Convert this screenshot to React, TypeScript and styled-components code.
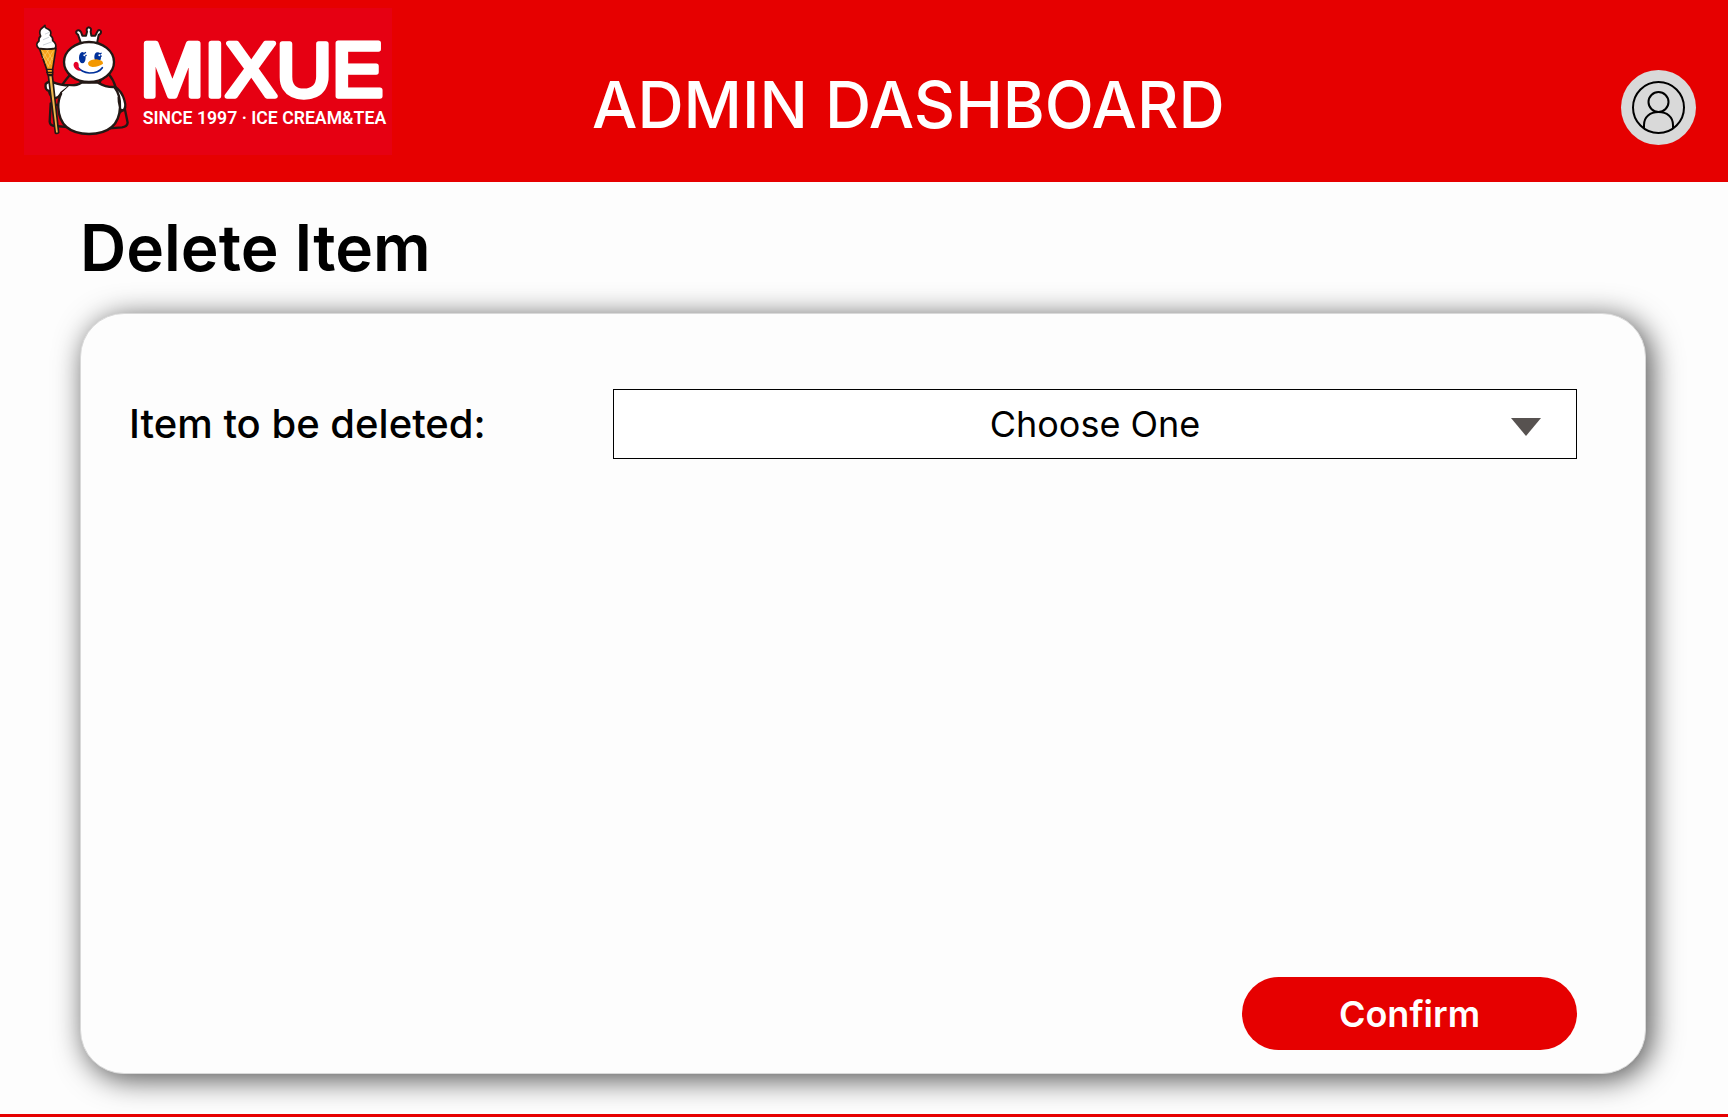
import React, { useState } from "react";
import styled, { createGlobalStyle } from "styled-components";

const RED = "#e60000";
const PAPER = "#fdfdfd";

const GlobalStyle = createGlobalStyle`
  *, *::before, *::after { box-sizing: border-box; }
  body {
    margin: 0;
    background: ${PAPER};
    color: #000;
    font-family: Inter, "Liberation Sans", sans-serif;
  }
`;

const Page = styled.div`
  display: flex;
  flex-direction: column;
  min-height: 100vh;
`;

const Header = styled.header`
  display: flex;
  align-items: center;
  min-height: 182px;
  padding: 8px 32px 0 24px;
  background: ${RED};
`;

const LogoLink = styled.a`
  display: block;
  flex: none;
  align-self: flex-start;
  line-height: 0;
`;

const LogoArt = styled.svg`
  width: 368px;
  height: 147px;
  background: #e60012;
`;

const HeaderTitle = styled.h1`
  flex: 1;
  margin: 20px 0 0 200px;
  font-size: 64px;
  font-weight: 500;
  line-height: 78px;
  color: #fff;
`;

const AvatarButton = styled.button`
  display: grid;
  place-items: center;
  flex: none;
  width: 75px;
  height: 75px;
  margin-top: 25px;
  padding: 0;
  border: 0;
  border-radius: 50%;
  background: #d9d9d9;
  cursor: pointer;
`;

const Main = styled.main`
  display: flex;
  flex: 1;
  flex-direction: column;
  gap: 26px;
  padding: 27px 82px 40px 80px;
`;

const PageTitle = styled.h2`
  margin: 0;
  font-size: 64px;
  font-weight: 600;
  line-height: 78px;
`;

const Panel = styled.form`
  display: flex;
  flex: 1;
  flex-direction: column;
  justify-content: space-between;
  gap: 48px;
  padding: 75px 68px 23px 48px;
  border: 1px solid #d9d9d9;
  border-radius: 44px;
  background: ${PAPER};
  box-shadow: 5px 5px 30px rgba(0, 0, 0, 0.7);
`;

const Field = styled.div`
  display: grid;
  grid-template-columns: 484px 1fr;
  align-items: center;
`;

const FieldLabel = styled.label`
  font-size: 40px;
  font-weight: 500;
  line-height: 48px;
`;

const SelectBox = styled.div`
  display: grid;
  align-items: center;
  > * { grid-area: 1 / 1; }
`;

const Select = styled.select`
  appearance: none;
  width: 100%;
  height: 70px;
  padding: 0 64px;
  border: 1px solid #000;
  border-radius: 0;
  background: #fff;
  color: #000;
  font-family: inherit;
  font-size: 36px;
  font-weight: 400;
  line-height: 44px;
  text-align: center;
  text-align-last: center;
`;

const Arrow = styled.svg`
  justify-self: end;
  width: 30px;
  height: 18px;
  margin: 6px 36px 0 0;
  pointer-events: none;
`;

const ConfirmButton = styled.button`
  align-self: flex-end;
  width: 335px;
  height: 73px;
  padding: 0;
  border: 0;
  border-radius: 37px;
  background: ${RED};
  color: #fff;
  font-family: inherit;
  font-size: 36px;
  font-weight: 600;
  line-height: 44px;
  cursor: pointer;
`;

const Footer = styled.footer`
  height: 3px;
  background: ${RED};
`;

function Logo() {
  return (
    <LogoArt viewBox="72 24 1104 441" role="img" aria-label="Mixue, since 1997, ice cream and tea">
      <g stroke="#231815" strokeWidth="7" strokeLinejoin="round" strokeLinecap="round">
        {/* cape */}
        <path d="M212 222 Q198 238 187 254 L250 262 L240 240 Z" fill="#e60012" />
        <path d="M326 222 Q340 238 347 262 L295 260 L302 240 Z" fill="#e60012" />
        <path d="M152 310 L149 365 Q150 378 165 378 L215 382 L190 320 Z" fill="#e60012" />
        <path d="M374 325 L383 368 Q382 380 366 382 L318 386 L350 345 Z" fill="#e60012" />
        {/* arms and body */}
        <path d="M212 256 Q180 256 160 247 Q144 242 137 252 Q134 270 147 273 Q150 290 162 295 Q176 294 184 278 Z" fill="#fff" />
        <path d="M345 260 Q366 274 373 300 Q381 326 368 332 Q356 328 358 312 L340 280 Z" fill="#fff" />
        <path d="M212 256 Q232 256 244 248 L294 248 Q318 262 343 261 Q362 285 360 322 Q357 400 267 402 Q178 400 175 322 Q174 300 184 280" fill="#fff" />
        <path d="M206 259 L186 278 L200 300 L240 262 Z" fill="#fff" stroke="none" />
        <path d="M355 293 Q354 306 360 324" fill="none" strokeWidth="5" />
        {/* crown */}
        <path d="M243 130 L234 104 Q227 100 229 94 Q236 87 243 96 L247 107 L258 107 L261 95 Q257 84 267 82 Q276 85 272 95 L274 107 L286 107 L292 95 Q297 86 303 94 Q304 101 296 105 L291 130 Z" fill="#fff" strokeWidth="6" />
        <ellipse cx="267" cy="186" rx="75" ry="60" fill="#fff" />
        {/* staff and cone */}
        <path d="M145 226 L157 226 L176 398 Q171 402 166 399 Z" fill="#efb74d" strokeWidth="5" />
        <path d="M118 145 L168 145 L158 208 L158 224 L143 224 L140 208 Z" fill="#f6a21b" strokeWidth="5" />
        <path d="M139 208 L158 208 M140 217 L158 217" strokeWidth="4" />
        <path d="M116 145 Q104 133 117 123 Q115 114 122 108 Q116 96 123 87 Q130 82 135 76 Q132 83 145 88 Q156 94 151 106 Q160 112 158 122 Q173 134 165 145 Q142 150 116 145 Z" fill="#fff" strokeWidth="5" />
      </g>
      <path d="M126 152 L154 194 M140 150 L158 180 M128 166 L146 200 M160 152 L136 190 M146 150 L128 176 M158 170 L144 200" stroke="#fbd071" strokeWidth="2" />
      <path d="M136 102 L148 97 M130 119 L146 112 M130 135 L154 126" stroke="#cfd3d8" strokeWidth="3" strokeLinecap="round" />
      {/* face */}
      <ellipse cx="247" cy="173" rx="10" ry="17" fill="#00319b" />
      <ellipse cx="293" cy="171" rx="10" ry="14" fill="#00319b" />
      <path d="M249 162 L258 157 M251 168 L260 166 M296 163 L305 159 M297 170 L305 168" stroke="#00319b" strokeWidth="4" />
      <circle cx="253" cy="166" r="3" fill="#fff" />
      <circle cx="298" cy="166" r="3" fill="#fff" />
      <path d="M234 203 Q246 217 268 219 Q296 219 307 203" fill="none" stroke="#00319b" strokeWidth="5" strokeLinecap="round" />
      <path d="M236 203 Q238 185 228 185 Q219 187 221 198 Q226 213 243 212 Z" fill="#e60027" />
      <path d="M264 188 Q272 178 290 178 Q310 181 309 191 Q298 200 278 201 Q264 199 264 188 Z" fill="#f39800" />
      <text
        x="421"
        y="289"
        fill="#fff"
        stroke="#fff"
        strokeWidth="16"
        strokeLinejoin="round"
        fontFamily="'Liberation Sans', Arial, sans-serif"
        fontSize="230"
        fontWeight="400"
      >
        MIXUE
      </text>
      <text x="428" y="372" fill="#fff" fontFamily="Roboto, sans-serif" fontSize="53" fontWeight="600">
        SINCE 1997 · ICE CREAM&amp;TEA
      </text>
    </LogoArt>
  );
}

function UserIcon() {
  return (
    <svg width="53" height="53" viewBox="0 0 53 53" fill="none" stroke="#000" strokeWidth="2" aria-hidden="true">
      <circle cx="26.5" cy="26.5" r="25.5" />
      <circle cx="26.5" cy="21" r="10" />
      <path d="M12 47 V44 C12 36 18 31 26.5 31 S41 36 41 44 V47" />
    </svg>
  );
}

export default function App() {
  const [item, setItem] = useState("");

  return (
    <>
      <GlobalStyle />
      <Page>
        <Header>
          <LogoLink href="#">
            <Logo />
          </LogoLink>
          <HeaderTitle>ADMIN DASHBOARD</HeaderTitle>
          <AvatarButton type="button" aria-label="Account">
            <UserIcon />
          </AvatarButton>
        </Header>
        <Main>
          <PageTitle>Delete Item</PageTitle>
          <Panel onSubmit={(event) => event.preventDefault()}>
            <Field>
              <FieldLabel htmlFor="item">Item to be deleted:</FieldLabel>
              <SelectBox>
                <Select id="item" value={item} onChange={(event) => setItem(event.target.value)}>
                  <option value="">Choose One</option>
                </Select>
                <Arrow viewBox="0 0 30 18" aria-hidden="true">
                  <path d="M0 0H30L15 18Z" fill="#575250" />
                </Arrow>
              </SelectBox>
            </Field>
            <ConfirmButton type="submit">Confirm</ConfirmButton>
          </Panel>
        </Main>
        <Footer />
      </Page>
    </>
  );
}
